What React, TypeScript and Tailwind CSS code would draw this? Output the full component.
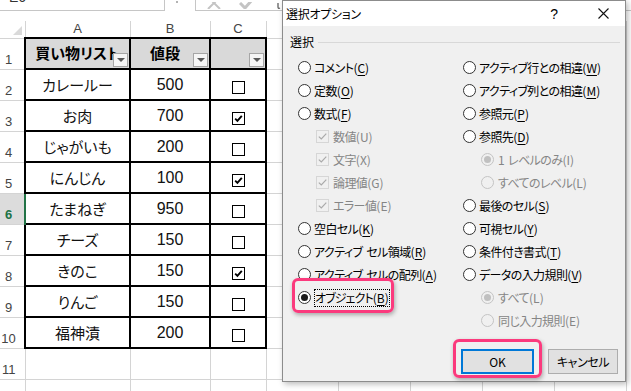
import React from 'react'

const items = [
  { name: 'カレールー', price: 500, checked: false },
  { name: 'お肉', price: 700, checked: true },
  { name: 'じゃがいも', price: 200, checked: false },
  { name: 'にんじん', price: 100, checked: true },
  { name: 'たまねぎ', price: 950, checked: false },
  { name: 'チーズ', price: 150, checked: false },
  { name: 'きのこ', price: 150, checked: true },
  { name: 'りんご', price: 150, checked: false },
  { name: '福神漬', price: 200, checked: false },
]

type Opt = { t: string; k: string; cb?: boolean; sub?: boolean; sel?: boolean }

const leftOpts: Opt[] = [
  { t: 'コメント', k: 'C' },
  { t: '定数', k: 'O' },
  { t: '数式', k: 'F' },
  { t: '数値', k: 'U', cb: true },
  { t: '文字', k: 'X', cb: true },
  { t: '論理値', k: 'G', cb: true },
  { t: 'エラー値', k: 'E', cb: true },
  { t: '空白セル', k: 'K' },
  { t: 'アクティブ セル領域', k: 'R' },
  { t: 'アクティブ セルの配列', k: 'A' },
  { t: 'オブジェクト', k: 'B', sel: true },
]

const rightOpts: Opt[] = [
  { t: 'アクティブ行との相違', k: 'W' },
  { t: 'アクティブ列との相違', k: 'M' },
  { t: '参照元', k: 'P' },
  { t: '参照先', k: 'D' },
  { t: '1 レベルのみ', k: 'I', sub: true, sel: true },
  { t: 'すべてのレベル', k: 'L', sub: true },
  { t: '最後のセル', k: 'S' },
  { t: '可視セル', k: 'Y' },
  { t: '条件付き書式', k: 'T' },
  { t: 'データの入力規則', k: 'V' },
  { t: 'すべて', k: 'L', sub: true, sel: true },
  { t: '同じ入力規則', k: 'E', sub: true },
]

const extraCols = ['D', 'E', 'F', 'G', 'H']

function FilterBtn() {
  return (
    <span className="absolute right-[1px] bottom-[1px] w-[15px] h-[14px] border border-[#a6a6a6] bg-[#f5f5f5] flex items-center justify-center">
      <span className="w-0 h-0 border-l-[4px] border-r-[4px] border-t-[4px] border-l-transparent border-r-transparent border-t-[#595959]" />
    </span>
  )
}

function CellCheck({ checked }: { checked: boolean }) {
  return (
    <span className="inline-flex w-[13px] h-[13px] border border-black bg-white items-center justify-center align-middle">
      {checked && (
        <svg width="11" height="11" viewBox="0 0 11 11">
          <path d="M2.2 5.6 L4.4 7.8 L8.8 2.8" stroke="#000" strokeWidth="1.9" fill="none" />
        </svg>
      )}
    </span>
  )
}

function Radio({ checked, disabled }: { checked?: boolean; disabled?: boolean }) {
  return (
    <span
      className={`w-[13px] h-[13px] rounded-full border flex items-center justify-center shrink-0 ${
        disabled ? 'border-[#c4c4c4] bg-[#f0f0f0]' : 'border-[#333333] bg-white'
      }`}
    >
      {checked && <span className={`w-[7px] h-[7px] rounded-full ${disabled ? 'bg-[#c0c0c0]' : 'bg-[#1a1a1a]'}`} />}
    </span>
  )
}

function DisabledCheck() {
  return (
    <span className="w-[13px] h-[13px] border border-[#d6d6d6] bg-[#f0f0f0] flex items-center justify-center shrink-0">
      <svg width="11" height="11" viewBox="0 0 11 11">
        <path d="M1.8 5.6 L4.3 8 L9.3 2.6" stroke="#a9a9a9" strokeWidth="1.2" fill="none" />
      </svg>
    </span>
  )
}

function OptionRow({ opt }: { opt: Opt }) {
  const disabled = opt.cb || opt.sub
  const focused = opt.sel && !disabled
  // keep the Japanese part tight, the (X) part at normal spacing
  const words = opt.t.split(' ')
  return (
    <div className={`h-[23px] flex items-center ${disabled ? 'pl-[18px]' : ''}`}>
      {opt.cb ? <DisabledCheck /> : <Radio checked={opt.sel} disabled={disabled} />}
      <span
        className={`whitespace-nowrap leading-[16px] ${disabled ? 'ml-[4px] text-[#858585]' : 'ml-[3px] text-black'} ${
          focused ? 'border border-dotted border-black ml-[2px]' : ''
        }`}
      >
        {words.map((w, i) => (
          <span key={i} className={`${focused ? 'tracking-[-0.9px]' : 'tracking-[-0.6px]'} ${i > 0 ? 'ml-[4px]' : ''}`}>
            {w}
          </span>
        ))}
        (
        {disabled ? opt.k : <span className="underline underline-offset-2">{opt.k}</span>})
      </span>
    </div>
  )
}

export default function App() {
  return (
    <div className="relative w-[631px] h-[391px] overflow-hidden bg-white font-['Liberation_Sans','Noto_Sans_CJK_JP',sans-serif] [font-feature-settings:'palt']">
      {/* formula bar strip */}
      <div className="flex h-[11px]">
        <div className="w-[165px] h-full border-r border-b border-[#c6c6c6] overflow-hidden">
          <div className="-mt-[11px] pl-[9px] text-[14px] leading-[16px] text-[#333]">E6</div>
        </div>
        <div className="w-[11px]" />
        <div className="w-[2px] h-[2px] mt-[1px] bg-[#9a9a9a] rounded-full" />
        <div className="w-[17px]" />
        <div className="flex-1 h-full border-l border-b border-[#c6c6c6] flex items-end overflow-hidden">
          <svg className="ml-[9px] mb-[1px]" width="18" height="7" viewBox="0 5 18 7">
            <path d="M3 0 L15 12 M15 0 L3 12" stroke="#c4c4c4" strokeWidth="2" fill="none" />
          </svg>
          <svg className="ml-[16px] mb-[1px]" width="14" height="7" viewBox="0 5 14 7">
            <path d="M1 6 L6 11 L13 3" stroke="#c4c4c4" strokeWidth="3" fill="none" />
          </svg>
          <svg className="ml-[24px] mb-[1px]" width="6" height="6" viewBox="0 0 6 6">
            <path d="M1 0 L1 4 Q1 6 3 5" stroke="#555" strokeWidth="1.2" fill="none" />
          </svg>
        </div>
      </div>
      <div className="h-[10px]" />

      {/* sheet */}
      <table className="table-fixed border-collapse w-[626px] text-[15px] font-['Noto_Sans_CJK_JP',sans-serif]">
        <colgroup>
          <col className="w-[25px]" />
          <col className="w-[105px]" />
          <col className="w-[80px]" />
          <col className="w-[56px]" />
          {extraCols.map((c) => (
            <col key={c} className="w-[72px]" />
          ))}
        </colgroup>
        <thead>
          <tr className="h-[17px]">
            <th className="relative p-0 border-r border-b border-[#d4d4d4]">
              <span className="absolute right-[3px] bottom-[3px] w-0 h-0 border-l-[9px] border-t-[9px] border-l-transparent border-t-transparent border-r-0 border-b-0 [border-bottom:9px_solid_#dadada]" />
            </th>
            {['A', 'B', 'C'].map((c) => (
              <th
                key={c}
                className="p-0 font-normal text-[13px] leading-[16px] text-[#444] text-center border-r border-b border-[#d4d4d4] font-['Liberation_Sans',sans-serif]"
              >
                {c}
              </th>
            ))}
            {extraCols.map((c) => (
              <th key={c} className="p-0 border-r border-b border-[#d4d4d4]" />
            ))}
          </tr>
        </thead>
        <tbody>
          {/* header row */}
          <tr className="h-[31px]">
            <td className="p-0 pr-[7px] align-bottom text-center text-[13px] leading-[18px] text-[#444] border-r border-b border-[#d4d4d4] font-['Liberation_Sans',sans-serif]">
              1
            </td>
            <td className="relative p-0 pb-[5px] align-bottom text-center font-bold bg-[#d9d9d9] border-2 border-black overflow-hidden whitespace-nowrap leading-[20px]">
              買い物リスト
              <FilterBtn />
            </td>
            <td className="relative p-0 pb-[5px] pr-[10px] align-bottom text-center font-bold bg-[#d9d9d9] border-2 border-black leading-[20px]">
              値段
              <FilterBtn />
            </td>
            <td className="relative p-0 bg-[#d9d9d9] border-2 border-black">
              <FilterBtn />
            </td>
            {extraCols.map((c) => (
              <td key={c} className="p-0 border-r border-b border-[#d4d4d4]" />
            ))}
          </tr>
          {items.map((it, i) => {
            const rowNo = i + 2
            const active = rowNo === 6
            return (
              <tr key={it.name} className="h-[31px]">
                <td
                  className={`p-0 pr-[7px] align-bottom text-center text-[13px] leading-[18px] border-b font-['Liberation_Sans',sans-serif] ${
                    active
                      ? 'bg-[#dcdcdc] text-[#217346] font-bold border-r-2 border-r-[#217346] border-b-[#d4d4d4]'
                      : 'text-[#444] border-r border-[#d4d4d4]'
                  }`}
                >
                  {rowNo}
                </td>
                <td className="p-0 pb-[4px] align-bottom text-center leading-[20px] border-2 border-black text-[#111]">
                  {it.name}
                </td>
                <td className="p-0 pb-[4px] align-bottom text-center leading-[20px] border-2 border-black text-[#111] font-['Liberation_Sans',sans-serif] text-[16px]">
                  {it.price}
                </td>
                <td className="p-0 pt-[3px] align-middle text-center border-2 border-black leading-[13px]">
                  <CellCheck checked={it.checked} />
                </td>
                {extraCols.map((c) => (
                  <td key={c} className="p-0 border-r border-b border-[#d4d4d4]" />
                ))}
              </tr>
            )
          })}
          {[11, 12].map((n) => (
            <tr key={n} className="h-[31px]">
              <td className="p-0 pr-[7px] align-bottom text-center text-[13px] leading-[18px] text-[#444] border-r border-b border-[#d4d4d4] font-['Liberation_Sans',sans-serif]">
                {n === 11 ? n : ''}
              </td>
              {['A', 'B', 'C', ...extraCols].map((c) => (
                <td key={c} className="p-0 border-r border-b border-[#d4d4d4]" />
              ))}
            </tr>
          ))}
        </tbody>
      </table>

      {/* dialog */}
      <div className="absolute left-[282px] top-0 w-[344px] h-[382px] border border-[#8c8c8c] bg-[#f0f0f0] shadow-[2px_2px_6px_rgba(0,0,0,0.28)] text-[12px] font-['Noto_Sans_CJK_JP',sans-serif] text-black">
        <div className="h-[25px] bg-white flex items-center pl-[3px]">
          <span className="leading-[16px] tracking-[-0.3px]">選択オプション</span>
          <span className="ml-auto mr-[40px] text-[14px] leading-[16px] font-['Liberation_Sans',sans-serif]">?</span>
          <svg className="mr-[16px]" width="11" height="11" viewBox="0 0 11 11">
            <path d="M0.5 0.5 L10.5 10.5 M10.5 0.5 L0.5 10.5" stroke="#111" strokeWidth="1.1" fill="none" />
          </svg>
        </div>
        <div className="pl-[7px] pr-[5px] pt-[8px]">
          <div className="h-[16px] flex items-center gap-[4px]">
            <span className="leading-[16px]">選択</span>
            <div className="flex-1 h-px bg-[#d8d8d8]" />
          </div>
          <div className="mt-[6px] pl-[8px] flex">
            <div className="w-[165px] flex flex-col">
              {leftOpts.map((o) => (
                <OptionRow key={o.t} opt={o} />
              ))}
            </div>
            <div className="flex flex-col">
              {rightOpts.map((o) => (
                <OptionRow key={o.t} opt={o} />
              ))}
            </div>
          </div>
          <div className="mt-[17px] flex justify-end gap-[14px] pr-[2px]">
            <button className="w-[73px] h-[25px] border-2 border-[#0078d7] bg-[#e1e1e1] text-[12px] leading-[16px]">
              OK
            </button>
            <button className="w-[70px] h-[25px] border border-[#adadad] bg-[#e1e1e1] text-[12px] leading-[16px] tracking-[-0.4px]">
              キャンセル
            </button>
          </div>
        </div>
      </div>

      {/* highlights */}
      <div className="absolute left-[292px] top-[278px] w-[102px] h-[35px] rounded-[6px] border-[3px] border-[#fb3a7d] shadow-[1px_2px_4px_rgba(0,0,0,0.3)]" />
      <div className="absolute left-[453px] top-[339px] w-[89px] h-[39px] rounded-[6px] border-[3px] border-[#fb3a7d] shadow-[1px_2px_4px_rgba(0,0,0,0.3)]" />
    </div>
  )
}
